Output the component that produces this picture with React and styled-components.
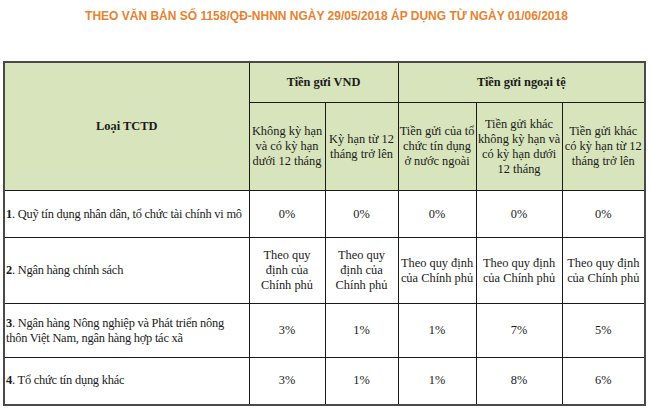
import React from 'react';
import styled, { createGlobalStyle } from 'styled-components';

const GlobalStyle = createGlobalStyle`
  body {
    margin: 0;
    background: #ffffff;
  }
`;

const Page = styled.div`
  width: 650px;
  padding: 0 0 0 3px;
  box-sizing: border-box;
`;

const Title = styled.h1`
  margin: 0;
  padding-top: 9px;
  height: 61px;
  box-sizing: border-box;
  text-align: center;
  font-family: "Liberation Sans", Arial, sans-serif;
  font-size: 12px;
  line-height: 15px;
  font-weight: bold;
  color: #e8822e;
`;

const Table = styled.table`
  border-collapse: collapse;
  table-layout: fixed;
  width: 641px;
  border: 2px solid #4a4a4a;
  font-family: "Liberation Serif", "Times New Roman", serif;
  font-size: 12.4px;
  line-height: 15px;
  color: #1a1a1a;
`;

const HeadCell = styled.th`
  background: #d8e4bc;
  border: 1px solid #1a1a1a;
  padding: 0;
  font-weight: ${(p) => (p.$bold ? 'bold' : 'normal')};
  text-align: center;
  vertical-align: middle;
  height: ${(p) => p.$h}px;
`;

const LabelCell = styled.td`
  border: 1px solid #1a1a1a;
  padding: 0 0 0 1px;
  text-align: left;
  vertical-align: middle;
  letter-spacing: -0.22px;
  white-space: pre-line;
`;

const ValueCell = styled.td`
  border: 1px solid #1a1a1a;
  padding: 0;
  text-align: center;
  vertical-align: middle;
  white-space: pre-line;
`;

const Row = styled.tr`
  height: ${(p) => p.$h}px;
`;

const Num = styled.b`
  font-weight: bold;
`;

const GOV = 'Theo quy định của Chính phủ';
const GOV3 = 'Theo quy\nđịnh của\nChính phủ';

const rows = [
  { n: '1', label: 'Quỹ tín dụng nhân dân, tổ chức tài chính vi mô', h: 47, v: ['0%', '0%', '0%', '0%', '0%'] },
  { n: '2', label: 'Ngân hàng chính sách', h: 66, v: [GOV3, GOV3, GOV, GOV, GOV] },
  { n: '3', label: 'Ngân hàng Nông nghiệp và Phát triển nông\nthôn Việt Nam, ngân hàng hợp tác xã', h: 54, v: ['3%', '1%', '1%', '7%', '5%'] },
  { n: '4', label: 'Tổ chức tín dụng khác', h: 47, v: ['3%', '1%', '1%', '8%', '6%'] },
];

const widths = [245, 76, 73, 78, 86, 83];

export default function App() {
  return (
    <Page>
      <GlobalStyle />
      <Title>THEO VĂN BẢN SỐ 1158/QĐ-NHNN NGÀY 29/05/2018 ÁP DỤNG TỪ NGÀY 01/06/2018</Title>
      <Table>
        <colgroup>
          {widths.map((w, i) => (
            <col key={i} style={{ width: w }} />
          ))}
        </colgroup>
        <thead>
          <tr>
            <HeadCell $bold rowSpan={2}>Loại TCTD</HeadCell>
            <HeadCell $bold colSpan={2} $h={39}>Tiền gửi VND</HeadCell>
            <HeadCell $bold colSpan={3} $h={39}>Tiền gửi ngoại tệ</HeadCell>
          </tr>
          <tr>
            <HeadCell $h={87}>Không kỳ hạn và có kỳ hạn dưới 12 tháng</HeadCell>
            <HeadCell $h={87}>Kỳ hạn từ 12 tháng trở lên</HeadCell>
            <HeadCell $h={87}>Tiền gửi của tổ chức tín dụng ở nước ngoài</HeadCell>
            <HeadCell $h={87}>Tiền gửi khác không kỳ hạn và có kỳ hạn dưới 12 tháng</HeadCell>
            <HeadCell $h={87}>Tiền gửi khác có kỳ hạn từ 12 tháng trở lên</HeadCell>
          </tr>
        </thead>
        <tbody>
          {rows.map((r) => (
            <Row key={r.n} $h={r.h}>
              <LabelCell>
                <Num>{r.n}</Num>. {r.label}
              </LabelCell>
              {r.v.map((v, i) => (
                <ValueCell key={i}>{v}</ValueCell>
              ))}
            </Row>
          ))}
        </tbody>
      </Table>
    </Page>
  );
}
